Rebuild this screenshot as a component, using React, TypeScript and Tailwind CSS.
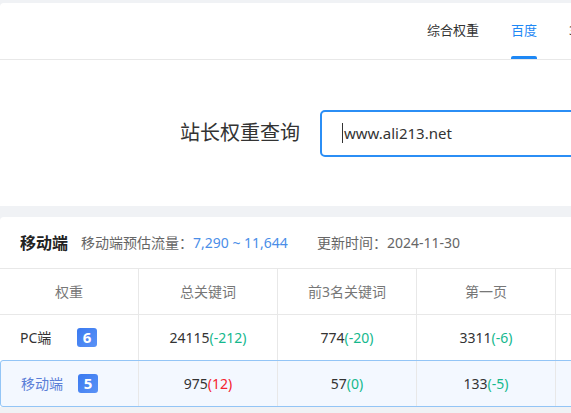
import React from 'react';

type Cell = { value: string; delta: string; up?: boolean };

interface Row {
  name: string;
  rank: number;
  cells: Cell[];
  active?: boolean;
}

const headers = ['权重', '总关键词', '前3名关键词', '第一页', '第二页'];

const rows: Row[] = [
  {
    name: 'PC端',
    rank: 6,
    cells: [
      { value: '24115', delta: '(-212)' },
      { value: '774', delta: '(-20)' },
      { value: '3311', delta: '(-6)' },
      { value: '4120', delta: '(-18)' },
    ],
  },
  {
    name: '移动端',
    rank: 5,
    active: true,
    cells: [
      { value: '975', delta: '(12)', up: true },
      { value: '57', delta: '(0)' },
      { value: '133', delta: '(-5)' },
      { value: '210', delta: '(3)', up: true },
    ],
  },
];

const tabs = ['综合权重', '百度', '360', '搜狗', '神马'];

const Badge = ({ n }: { n: number }) => (
  <span className="flex h-[19px] w-[20px] items-center justify-center rounded-[3px] bg-gradient-to-br from-[#3a7af0] to-[#5a92f6] text-[15px] font-bold leading-none text-white">
    {n}
  </span>
);

const App = () => {
  return (
    <div
      className="h-[413px] w-[571px] overflow-hidden bg-[#f0f2f5] pt-[3px]"
      style={{ fontFamily: '"Noto Sans", "Noto Sans CJK SC", sans-serif' }}
    >
      <div className="w-[820px]">
        {/* search card */}
        <div className="rounded-tl-[4px] bg-white">
          <div className="flex h-[57px] gap-[32px] border-b border-[#e8e8e8] pl-[427px]">
            {tabs.map((t, i) => (
              <div
                key={t}
                className={`relative flex items-center text-[13px] ${i === 1 ? 'text-[#1e88f5]' : 'text-[#333]'}`}
              >
                {t}
                {i === 1 && <span className="absolute bottom-0 left-0 right-0 h-[3px] rounded-t-[2px] bg-[#1e88f5]" />}
              </div>
            ))}
          </div>
          <div className="flex h-[146px] items-center gap-[20px] pl-[180px]">
            <span className="text-[20px] text-[#333]">站长权重查询</span>
            <div className="flex h-[47px] w-[420px] items-center rounded-[5px] border-2 border-[#2b8ef5] pl-[20px]">
              <span className="mr-[1px] h-[20px] w-[1px] bg-[#333]" />
              <span className="text-[15px] text-[#333]">www.ali213.net</span>
            </div>
          </div>
        </div>

        {/* result card */}
        <div className="mt-[11px] rounded-tl-[4px] bg-white">
          <div className="flex h-[51px] items-center pl-[20px]">
            <span className="text-[16px] font-bold text-[#222]">移动端</span>
            <span className="ml-[13px] text-[14px] text-[#666]">移动端预估流量：</span>
            <span className="text-[14px] text-[#4a8ee8]">7,290 ~ 11,644</span>
            <span className="ml-[29px] text-[14px] text-[#666]">更新时间：2024-11-30</span>
          </div>

          <div className="flex border-y border-[#e8e8e8]">
            {headers.map(h => (
              <div
                key={h}
                className="flex h-[45px] w-[139px] items-center justify-center border-r border-[#e8e8e8] text-[14px] text-[#777]"
              >
                {h}
              </div>
            ))}
          </div>

          {rows.map(r => (
            <div
              key={r.name}
              className={`flex ${r.active ? 'rounded-[3px] border border-[#93c5f6] bg-[#f3f8ff]' : ''}`}
            >
              <div
                className={`flex h-[45px] items-center border-r border-[#e8e8e8] pl-[20px] ${r.active ? 'w-[138px] pl-[19px]' : 'w-[139px]'}`}
              >
                <span className={`w-[57px] text-[14px] ${r.active ? 'text-[#5b7fd8]' : 'text-[#333]'}`}>{r.name}</span>
                <Badge n={r.rank} />
              </div>
              {r.cells.map((c, i) => (
                <div
                  key={i}
                  className="flex h-[45px] w-[139px] items-center justify-center border-r border-[#e8e8e8] text-[14px] text-[#333]"
                >
                  {c.value}
                  <span className={c.up ? 'text-[#f5222d]' : 'text-[#15b88d]'}>{c.delta}</span>
                </div>
              ))}
            </div>
          ))}
        </div>
      </div>
    </div>
  );
};

export default App;
